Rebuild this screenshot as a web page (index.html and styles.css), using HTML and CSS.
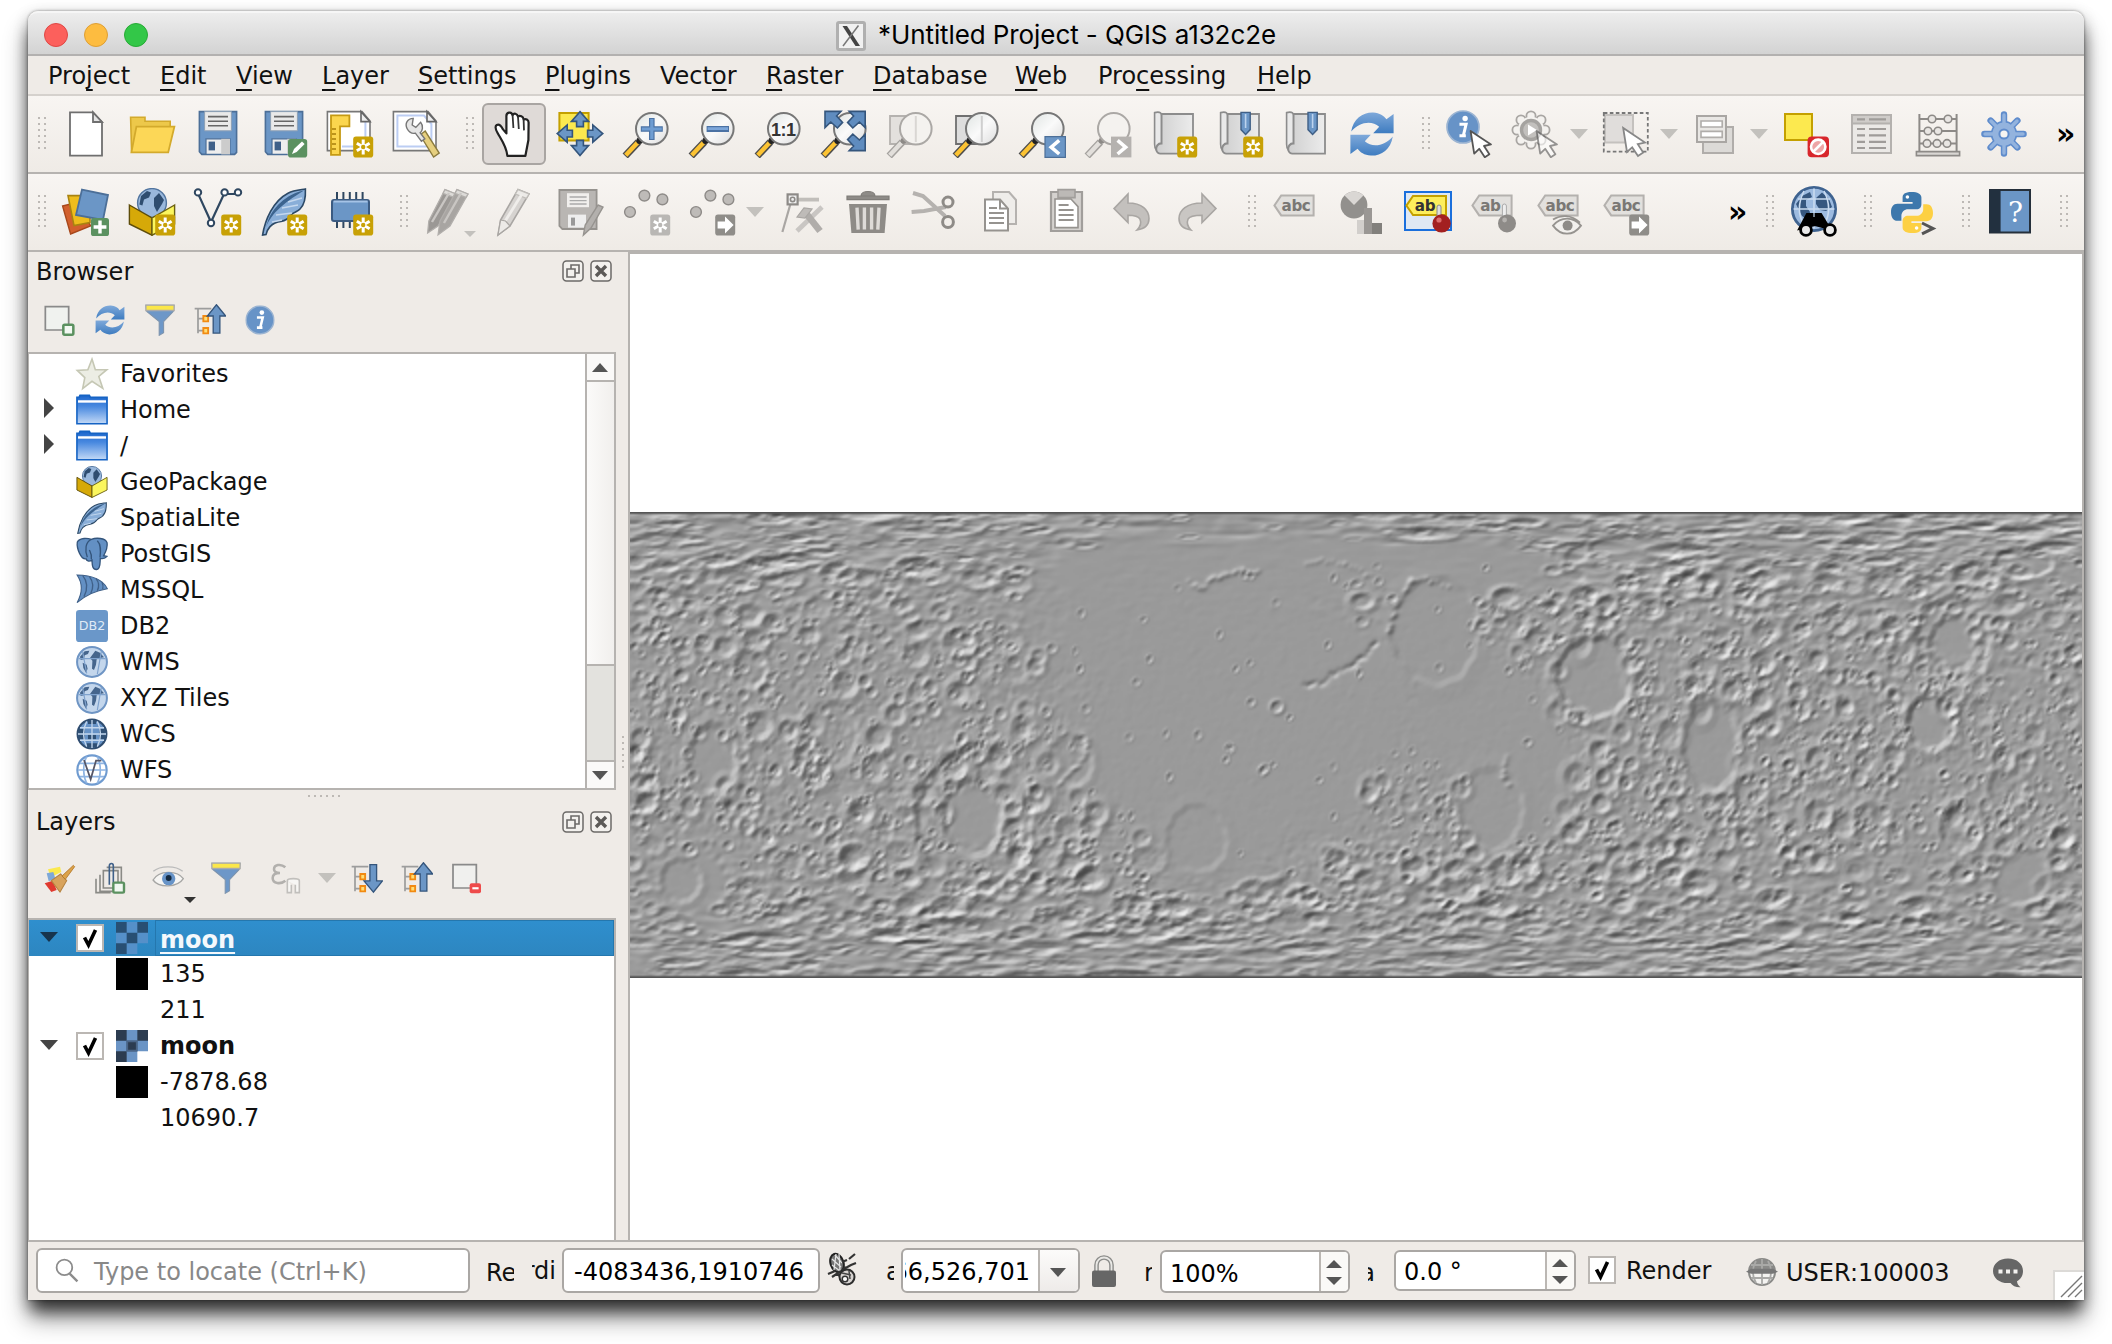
FILE: index.html
```html
<!DOCTYPE html>
<html lang="en">
<head>
<meta charset="utf-8">
<title>*Untitled Project - QGIS a132c2e</title>
<link rel="stylesheet" href="styles.css">
</head>
<body>
<svg class="sprite" aria-hidden="true">
  <defs>
    <linearGradient id="g-folder" x1="0" y1="0" x2="0" y2="1"><stop offset="0" stop-color="#1c66cc"/><stop offset=".4" stop-color="#4a8ae0"/><stop offset="1" stop-color="#c3d9f6"/></linearGradient>
    <linearGradient id="g-sync" x1="0" y1="0" x2="0" y2="1"><stop offset="0" stop-color="#7fa9da"/><stop offset="1" stop-color="#3e7cc0"/></linearGradient>
    <linearGradient id="g-page" x1="0" y1="0" x2="1" y2="0"><stop offset="0" stop-color="#cfcfcf"/><stop offset="1" stop-color="#ececec"/></linearGradient>
    <linearGradient id="g-lens" x1="0" y1="0" x2="1" y2="1"><stop offset="0" stop-color="#dfe4e2"/><stop offset=".5" stop-color="#fafafa"/><stop offset="1" stop-color="#dcdcdc"/></linearGradient>
  </defs>
  <symbol id="star" viewBox="0 0 24 24"><rect x="13.6" y="13.2" width="10" height="10.6" rx="1.4" fill="#c8a106"/><path d="M18.6 14.8v7.4M15.4 16.6l6.4 3.8M21.8 16.6l-6.4 3.8" stroke="#fff" stroke-width="1.5"/><circle cx="18.6" cy="18.5" r="1.1" fill="#c8a106"/></symbol>
  <symbol id="star-off" viewBox="0 0 24 24"><rect x="13.6" y="13.2" width="10" height="10.6" rx="1.4" fill="#b9b7b4"/><path d="M18.6 14.8v7.4M15.4 16.6l6.4 3.8M21.8 16.6l-6.4 3.8" stroke="#fff" stroke-width="1.5"/><circle cx="18.6" cy="18.5" r="1.1" fill="#b9b7b4"/></symbol>
  <symbol id="arrow-off" viewBox="0 0 24 24"><rect x="13.6" y="13.2" width="10" height="10.6" rx="1.4" fill="#8f8d89"/><path d="M14.8 16.700h3.700v-2.400l4.300 4.200-4.300 4.200v-2.400h-3.700z" fill="#fff"/></symbol>
  <symbol id="cursor" viewBox="0 0 24 24"><path d="M12.3 10.5l1.800 11.300 2.500-2.400 2.800 4.200 2.300-1.500-2.700-4.100 3.500-.8z" fill="#fff" stroke="#555" stroke-width=".9" stroke-linejoin="round"/></symbol>
  <symbol id="mag" viewBox="0 0 24 24"><path d="M1.600 23l6.600-7" stroke="#4c4c4c" stroke-width="3.600"/><path d="M1.900 22.600l5.800-6.200" stroke="#fcc333" stroke-width="2.200"/><circle cx="8.800" cy="15.400" r="1.600" fill="#222"/><circle cx="14.900" cy="9.400" r="7.900" fill="url(#g-lens)" stroke="#777" stroke-width="1"/></symbol>
  <symbol id="mag-off" viewBox="0 0 24 24"><path d="M1.600 23l6.600-7" stroke="#a4a19e" stroke-width="3.600"/><path d="M1.900 22.600l5.800-6.200" stroke="#e2dfdb" stroke-width="2.200"/><circle cx="8.800" cy="15.400" r="1.500" fill="#8d8a87"/><circle cx="14.900" cy="9.400" r="7.900" fill="#f4f2ef" stroke="#aba8a5" stroke-width="1"/></symbol>
  <symbol id="new" viewBox="0 0 24 24"><path d="M4 1.200h11.500L20 6v16.800H4z" fill="#fff" stroke="#6f6f6f" stroke-width=".9"/><path d="M15.500 1.200V6H20z" fill="#e4e4e4" stroke="#6f6f6f" stroke-width=".9"/></symbol>
  <symbol id="open" viewBox="0 0 24 24"><path d="M1.300 3.600h7.200v2h12.600v3H6L1.800 20.800z" fill="#edc84a" stroke="#d3aa2c" stroke-width=".8"/><path d="M4.200 8.300h19l-3.100 12.900H1.700z" fill="#fcd757" stroke="#d3aa2c" stroke-width=".9"/></symbol>
  <symbol id="save" viewBox="0 0 24 24"><path d="M2.700.8h18.600v20.400l-1 1H3.900l-1.200-1.300z" fill="#6b96c6" stroke="#4c6f98" stroke-width=".8"/><path d="M5.300.8h13.400v9.600H5.300z" fill="#e9e9e9" stroke="#8da0b5" stroke-width=".5"/><path d="M7 3.300h10M7 5.600h10M7 7.900h10" stroke="#666" stroke-width=".8"/><path d="M6 14.400h12v7.800H6z" fill="#eee" stroke="#4c6f98" stroke-width=".6"/><path d="M7.300 15.800h3.200v4.400H7.300z" fill="#3f6089"/><path d="M13.600 14.400h4.400v7.800h-4.400z" fill="#ccc"/></symbol>
  <symbol id="sync" viewBox="0 0 24 24"><path d="M1.600 10.800C2.600 4.200 7.600 1 12.600 1.200c3.300.2 5.300 1.600 6.600 3.400L22.800 2v9.600H12.600l3-3.200c-3.800-3.500-10-2.400-14 2.400z" fill="url(#g-sync)"/><path d="M22.400 13.200c-1 6.600-6 9.800-11 9.600-3.300-.2-5.300-1.600-6.600-3.400L1.200 22v-9.600h10.200l-3 3.200c3.800 3.500 10 2.400 14-2.400z" fill="url(#g-sync)"/></symbol>
  <symbol id="map" viewBox="0 0 24 24"><path d="M1.300 1.300C4.500.5 4.800 2 4.800 3v13.500c-2 0-2.800 1.500-2.600 3.600-.8-.8-.9-2-.9-3z" fill="#e9e9e9" stroke="#8c8c8c" stroke-width=".8"/><path d="M4.800 2h15.700v19.800H4c-2.500 0-2.700-4.800.8-5z" fill="url(#g-page)" stroke="#8c8c8c" stroke-width=".9"/></symbol>
  <symbol id="mark" viewBox="0 0 24 24"><path d="M12 1.200h4.600v8.600l-2.300 2.400-2.300-2.400z" fill="#6b96c6" stroke="#3f5f86" stroke-width=".7"/><path d="M14.300 2v7" stroke="#bcd3ee" stroke-width=".8"/></symbol>
  <symbol id="info" viewBox="0 0 24 24"><circle cx="12" cy="12" r="11.300" fill="#6793c7" stroke="#9bb4d2" stroke-width="1.200"/><circle cx="13.500" cy="6" r="1.900" fill="#fff"/><path d="M9.500 10h4.700l-2 8.200h1.800M9.500 18.200h3" stroke="#fff" stroke-width="2.100" fill="none"/></symbol>
  <symbol id="tag" viewBox="0 0 24 24"><path d="M4.600 3.700h16.200v10H4.600L1.200 8.700z" fill="#e2e0dd" stroke="#b4b1ae" stroke-width="1"/></symbol>
  <symbol id="earth" viewBox="0 0 24 24"><circle cx="12" cy="12" r="11.200" fill="#c3d6ec" stroke="#6f95c4" stroke-width="1.500"/><path d="M3 8l3.500-4L10 3.500 9 6l-2.500 1-.5 3-2.500.5zM12 7l2.500-3.500L18 5l3 3.500-3 .5-2.500 1-.5 4-1.500 4-1.500-1 .3-6-1.800-2zM5 12.500l3 1.500.7 3-1.200 3-2-3.500z" fill="#45658c"/><path d="M2 9.500h20M5 4.500l3 16M19 4l-3 17" stroke="#7fa2cd" stroke-width=".9"/></symbol>
  <symbol id="gpkg" viewBox="0 0 24 24"><circle cx="12" cy="7.500" r="7.200" fill="#9ab8dc" stroke="#52759f" stroke-width=".7"/><path d="M6.500 4l3-2.500 2 .7-1 2.600-2.500 1-.8 3-1.500-.5zM13 5l2.500-2.500L18 6l-1 2-2.500 4-1.500-3z" fill="#2f4d70"/><path d="M.7 8.500L12 15v8.600L.7 18z" fill="#d6a908" stroke="#5d4c0a" stroke-width=".7"/><path d="M23.300 8.500L12 15v8.600L23.300 18z" fill="#fbf65e" stroke="#6b6012" stroke-width=".7"/></symbol>
  <symbol id="feather" viewBox="0 0 24 24"><path d="M1.300 23.500C2.500 16 6.500 6.500 14 2.600 17 1 20.600.9 22.700.5c.2 4-.6 8-2.700 10-1 1.200-2.800 1.600-4 2.600-1.400 1.800-3 3.200-5.500 3.600-2.500.2-3.700.8-5.500 2.600-.9 1-1.600 2.300-2 4z" fill="#89aed8" stroke="#2c4966" stroke-width=".8"/><path d="M2 22C5 13 11 8 22 1.200 13 3 6 10 3.800 17z" fill="#3c648f"/><path d="M8 13.500l8-1M11 10l8-1.500M14 7l7-2M6 17l5-1" stroke="#c5d8ee" stroke-width=".7"/></symbol>
  <symbol id="funnel" viewBox="0 0 24 24"><path d="M1.500 1h21l-.6 4.600-7.200 7.600v8.300l-3.300 2v-10.300L2.100 5.600z" fill="#6d97c8" stroke="#7d93ac" stroke-width=".8"/><path d="M1.400.9h21.200v4H1.400z" fill="#fbe74a" stroke="#aaa" stroke-width="1"/></symbol>
  <symbol id="tree" viewBox="0 0 24 24"><path d="M.5 3.500H13M3 3.500V22M3 11h4M3 20h4" stroke="#9d9d9d" stroke-width="1.300" fill="none"/><path d="M7 9h3.600v4H7zM7 18h3.600v4H7z" fill="#ffde74" stroke="#f28a12" stroke-width="1.400"/></symbol>
  <symbol id="collapse" viewBox="0 0 24 24"><use href="#tree"/><path d="M16.800.6l7 8.400h-4.400v12.800h-5V9h-4.400z" fill="#6b96c6" stroke="#34557c" stroke-width="1"/></symbol>
  <symbol id="expand" viewBox="0 0 24 24"><use href="#tree"/><path d="M16.800 22.600l-7-8.400h4.400V2h5v12.200h4.400z" fill="#6b96c6" stroke="#34557c" stroke-width="1"/></symbol>
  <symbol id="folder" viewBox="0 0 24 24"><path d="M.7 22.300V2.500h1.600L3 1h7l.8 1.500h12.500v19.800z" fill="url(#g-folder)" stroke="#1563c4" stroke-width="1.200"/><path d="M1.500 5.600h21" stroke="#fff" stroke-width="1.800"/></symbol>
  <symbol id="raster" viewBox="0 0 24 24"><path d="M0 0h24v16h-8v8H0z" fill="#6a94c5"/><path d="M0 0h8v8H0zM16 0h8v8h-8zM8 8h8v8H8zM0 16h8v8H0z" fill="#2c3c50"/><path d="M8.500 8.500h7v7h-7z" fill="none" stroke="#4a6587" stroke-width="1.200"/></symbol>
  <symbol id="raster-sel" viewBox="0 0 24 24"><path d="M0 0h24v16h-8v8H0z" fill="#5590c9"/><path d="M0 0h8v8H0zM16 0h8v8h-8zM8 8h8v8H8zM0 16h8v8H0z" fill="#284f73"/></symbol>
  <symbol id="float" viewBox="0 0 22 22"><rect x="1" y="1" width="20" height="20" rx="3.500" fill="#f3f1ee" stroke="#6c6a68" stroke-width="1.500"/><path d="M9 9V5h8v8h-4M5 9h8v8H5z" fill="none" stroke="#6c6a68" stroke-width="1.600"/></symbol>
  <symbol id="close" viewBox="0 0 22 22"><rect x="1" y="1" width="20" height="20" rx="3.500" fill="#f3f1ee" stroke="#6c6a68" stroke-width="1.500"/><path d="M6 6l10 10M16 6L6 16" stroke="#5c5a58" stroke-width="3.400"/></symbol>
  <symbol id="check" viewBox="0 0 28 28"><path d="M8.500 13.500l4 7.500L19.500 6" fill="none" stroke="#000" stroke-width="3.600"/></symbol>
</svg>

<main class="window">
  <header class="titlebar">
    <span class="lights"><i class="red"></i><i class="amber"></i><i class="green"></i></span>
    <svg class="xicon" viewBox="0 0 30 30"><rect width="30" height="30" rx="3" fill="#b0b0b0"/><rect x="3" y="3" width="24" height="24" fill="#f1f1f1"/><path d="M6.500 5H11l13 20h-4.500z" fill="#444"/><path d="M22.500 4.500L7 25" stroke="#777" stroke-width="1.500"/></svg>
    <span class="title">*Untitled Project - QGIS a132c2e</span>
  </header>

  <nav class="menubar">
    <span>Pro<u>j</u>ect</span><span><u>E</u>dit</span><span><u>V</u>iew</span><span><u>L</u>ayer</span><span><u>S</u>ettings</span><span><u>P</u>lugins</span><span>Vect<u>o</u>r</span><span><u>R</u>aster</span><span><u>D</u>atabase</span><span><u>W</u>eb</span><span>Pro<u>c</u>essing</span><span><u>H</u>elp</span>
  </nav>

  <section class="toolbar">
    <span class="grip first"></span>
    <span class="btn"><svg viewBox="0 0 24 24"><use href="#new"/></svg></span>
    <span class="btn"><svg viewBox="0 0 24 24"><use href="#open"/></svg></span>
    <span class="btn"><svg viewBox="0 0 24 24"><use href="#save"/></svg></span>
    <span class="btn"><svg viewBox="0 0 24 24"><use href="#save"/><rect x="14" y="14.500" width="9.600" height="9.300" rx="1.400" fill="#5b9160"/><path d="M16 22l1-2.500 4-3.800 1.300 1.300-4 4z" fill="#fff"/></svg></span>
    <span class="btn"><svg viewBox="0 0 24 24"><path d="M.7.800H18L22 5.500v14.800H.7z" fill="#fff" stroke="#777" stroke-width=".8"/><path d="M19.700 6v12.300H8" fill="none" stroke="#bccdf3" stroke-width="1"/><path d="M17.500.8v5H22z" fill="#eee" stroke="#666" stroke-width=".8"/><path d="M2.500 2.700h9.200v5.500H7v14.200H2.500z" fill="#fbd64e" stroke="#c59a13" stroke-width=".9"/><path d="M3 9.500h2M3 12h2M3 14.500h2M3 17h2M3 19.500h2" stroke="#a87f0b" stroke-width=".7"/><use href="#star"/></svg></span>
    <span class="btn"><svg viewBox="0 0 24 24"><path d="M.7.800H18L22 5.500v14.800H.7z" fill="#fff" stroke="#777" stroke-width=".8"/><path d="M2.700 2.800H16l3.700 4.200v11.300h-17z" fill="none" stroke="#bccdf3" stroke-width="1"/><path d="M17.500.8v5H22z" fill="#eee" stroke="#666" stroke-width=".8"/><path d="M14 12.500l2.600-2 7 11-2.800 2z" fill="#e6cf7e" stroke="#8a7a3e" stroke-width=".7"/><path d="M7.600 9.400c-1.400-2.600.2-5.200 3-5.200l-.5 3.300 1.800 1.200 2.400-2.600c1.700 2 .8 4.400-.2 5.300l2.300 3-1.700 1.200-3-4c-1.700.3-3.300-.6-4.100-2.200z" fill="#e6e6e6" stroke="#777" stroke-width=".7"/></svg></span>
    <span class="grip"></span>
    <span class="btn active"><svg viewBox="0 0 24 24"><path d="M8.700 22.900C8.200 18 5.500 14.500 3.800 11.500c-.9-1.600-1.600-3.300-.4-4 1.200-.6 2.300.7 3.100 2.200l1.700 2V3.400C8 1 10.800.5 11.300 2.600c.6-1.200 2.300-.9 2.700.7 1-.7 2.600-.1 2.800 1.400 1-.5 2.500.1 2.500 1.600L19.200 15l-1.500 7.900z" fill="#fff" stroke="#222" stroke-width="1.100" stroke-linejoin="round"/><path d="M11.300 2.600l.4 6.400M14 3.300l.4 6.200M16.800 4.700l.2 5.500" stroke="#333" stroke-width=".9"/></svg></span>
    <span class="btn"><svg viewBox="0 0 24 24"><path d="M1.700 1.500h14.600v13.800H1.700z" fill="#fce94f" stroke="#c4a000" stroke-width="1"/><path d="M12 .8l4.300 4.900h-2.600v2.600h-3.400V5.700H7.700zM12 22.800l4.300-5h-2.600v-2.600h-3.400v2.600H7.700zM.6 11.800l5-4.300v2.600h2.600v3.400H5.600v2.600zM23.400 11.800l-5-4.300v2.600h-2.600v3.400h2.600v2.600z" fill="#6b96c6" stroke="#34557c" stroke-width=".8"/></svg></span>
    <span class="btn"><svg viewBox="0 0 24 24"><use href="#mag"/><path d="M14.900 4v11M9.400 9.500h11" stroke="#4b72a4" stroke-width="2.800"/><path d="M14.900 4.500v10M9.900 9.500h10" stroke="#6f9dd2" stroke-width="1.600"/></svg></span>
    <span class="btn"><svg viewBox="0 0 24 24"><use href="#mag"/><path d="M9.300 9.500h11.200" stroke="#4b72a4" stroke-width="3"/><path d="M9.800 9.300h10.200" stroke="#7ba6da" stroke-width="1.400"/></svg></span>
    <span class="btn"><svg viewBox="0 0 24 24"><use href="#mag"/><text x="14.600" y="12.900" class="one" text-anchor="middle">1:1</text></svg></span>
    <span class="btn"><svg viewBox="0 0 24 24"><use href="#mag"/><path d="M2.500.7h8L8.300 3l3 3.200L8.700 9 5.400 6 2.500 8.800zM22.600.7h-8L16.800 3l-3 3.200L16.400 9l3.300-3 2.900 2.800zM22.600 20.300h-8l2.200-2.300-3-3.200 2.600-2.800 3.300 3 2.900-2.800z" fill="#5f8cbf" stroke="#34557c" stroke-width=".8"/></svg></span>
    <span class="btn"><svg viewBox="0 0 24 24"><path d="M2 3h12v14H2z" fill="#e3e0dd" stroke="#b5b2af" stroke-width=".9"/><use href="#mag-off"/><path d="M14.900 3v13" stroke="#d9d6d3"/></svg></span>
    <span class="btn"><svg viewBox="0 0 24 24"><path d="M2 3h12v14H2z" fill="#ddd" stroke="#6f6f6f" stroke-width=".9"/><use href="#mag"/><path d="M14.900 3v13" stroke="#cfcfcf"/></svg></span>
    <span class="btn"><svg viewBox="0 0 24 24"><use href="#mag"/><path d="M13.500 13.300h10.200v10.400H13.500z" fill="#6b96c6" stroke="#4c6f98" stroke-width=".6"/><path d="M20.600 15.200l-4 3.400 4 3.400" fill="none" stroke="#fff" stroke-width="1.800"/></svg></span>
    <span class="btn"><svg viewBox="0 0 24 24"><use href="#mag-off"/><path d="M13.500 13.300h10.200v10.400H13.500z" fill="#b5b2af"/><path d="M16.800 15.200l4 3.400-4 3.400" fill="none" stroke="#fff" stroke-width="1.800"/></svg></span>
    <span class="btn"><svg viewBox="0 0 24 24"><use href="#map" x="1"/><use href="#star"/></svg></span>
    <span class="btn"><svg viewBox="0 0 24 24"><use href="#map" x="1"/><use href="#mark" x=".5"/><use href="#star"/></svg></span>
    <span class="btn"><svg viewBox="0 0 24 24"><use href="#map" x="1"/><use href="#mark" x="1"/></svg></span>
    <span class="btn"><svg viewBox="0 0 24 24"><use href="#sync"/></svg></span>
    <span class="grip"></span>
    <span class="btn"><svg viewBox="0 0 24 24"><use href="#info" x="0" y="0" width="17" height="17"/><use href="#cursor"/></svg></span>
    <span class="btn"><svg viewBox="0 0 24 24"><g fill="#f4f2ef" stroke="#a9a6a3" stroke-width=".9"><circle cx="9.500" cy="3" r="2.300"/><circle cx="9.500" cy="17" r="2.300"/><circle cx="2.500" cy="10" r="2.300"/><circle cx="16.500" cy="10" r="2.300"/><circle cx="4.500" cy="5" r="2.300"/><circle cx="14.500" cy="5" r="2.300"/><circle cx="4.500" cy="15" r="2.300"/><circle cx="14.500" cy="15" r="2.300"/></g><circle cx="9.500" cy="10" r="6.600" fill="#f4f2ef"/><circle cx="9.500" cy="10" r="5.600" fill="#a5a3a0"/><circle cx="9.500" cy="10" r="3.900" fill="#c2c0bd"/><path d="M8 7.200v5.600l4.400-2.800z" fill="#fff"/><g opacity=".6"><use href="#cursor"/></g></svg></span>
    <span class="caret"></span>
    <span class="btn"><svg viewBox="0 0 24 24"><path d="M1.500 2.500h14v13.800h-14z" fill="#e0dddb" stroke="#c4c1be"/><path d="M.9 1.500h22v19.300H.9z" fill="none" stroke="#777" stroke-width=".9" stroke-dasharray="1.800 1.200"/><path d="M10.600 9l1.900 12 2.600-2.300 2.900 4.300 2.600-1.700-2.700-4.200 3.600-.8z" fill="#fff" stroke="#888" stroke-width=".9"/></svg></span>
    <span class="caret"></span>
    <span class="btn"><svg viewBox="0 0 24 24"><path d="M5.500 8.500h15v13h-15z" fill="#dcdad7" stroke="#b0adaa"/><path d="M2.500 3H17v13H2.500z" fill="#e9e7e4" stroke="#a9a6a3"/><path d="M4.500 5.500h10.600v3H4.500zM4.500 10.700h10.600v3H4.500z" fill="#fff" stroke="#b0adaa" stroke-width=".8"/></svg></span>
    <span class="caret"></span>
    <span class="btn"><svg viewBox="0 0 24 24"><path d="M1.500 2H15v13H1.500z" fill="#fce94f" stroke="#c4a000"/><rect x="12.800" y="13.300" width="10.700" height="10.300" rx="2" fill="#d8262c"/><circle cx="18.100" cy="18.400" r="3.600" fill="#eda5a6" stroke="#fff" stroke-width="1.300"/><path d="M15.500 21l5.200-5.200" stroke="#fff" stroke-width="1.300"/></svg></span>
    <span class="btn"><svg viewBox="0 0 24 24"><path d="M2 2.500h19.500v19H2z" fill="#ebe9e6" stroke="#b4b1ae"/><path d="M2 2.500h19.500v4.200H2z" fill="#cfccc9" stroke="#b4b1ae"/><path d="M4.500 9.500h4M10.500 9.500h8.500M4.500 12.700h4M10.500 12.700h8.500M4.500 15.900h4M10.500 15.900h8.500M4.500 19h4M10.500 19h8.500M4.500 4.700h4M10.500 4.700h8.500" stroke="#9f9c99" stroke-width="1.100"/></svg></span>
    <span class="btn"><svg viewBox="0 0 24 24"><path d="M2.700 2v18.500M21.300 2v18.500M2.700 4.500h18.600M2.700 10.500h18.600M2.700 16.700h18.600" stroke="#8d8a87" stroke-width="1" fill="none"/><path d="M1.200 20.800h21.600v2H1.200z" fill="#d9d6d3" stroke="#8d8a87" stroke-width=".8"/><g fill="#e9e6e3" stroke="#8d8a87" stroke-width=".8"><circle cx="9" cy="4.500" r="1.900"/><circle cx="17" cy="4.500" r="1.900"/><circle cx="7" cy="10.500" r="1.900"/><circle cx="12" cy="10.500" r="1.900"/><circle cx="6.500" cy="16.700" r="1.900"/><circle cx="11.500" cy="16.700" r="1.900"/><circle cx="16.500" cy="16.700" r="1.900"/></g></svg></span>
    <span class="btn"><svg viewBox="0 0 24 24"><g stroke="#5f8ccc" stroke-width="3.200" stroke-linecap="round"><path d="M12 2.200v19.600M2.200 12h19.600M5.300 5.300l13.400 13.400M18.700 5.300L5.300 18.700"/></g><circle cx="12" cy="12" r="6.600" fill="#5f8ccc"/><g stroke="#93b3de" stroke-width="1.700" stroke-linecap="round"><path d="M12 2.500v19M2.500 12h19M5.500 5.500l13 13M18.500 5.500l-13 13"/></g><circle cx="12" cy="12" r="5.800" fill="#93b3de"/><circle cx="12" cy="12" r="2.300" fill="#f6f4f1" stroke="#5f8ccc"/></svg></span>
    <span class="more">»</span>
  </section>

  <section class="toolbar second">
    <span class="grip first"></span>
    <span class="btn"><svg viewBox="0 0 24 24"><path d="M.3 9l8-2 6 12-10 4z" fill="#d2602d" stroke="#a8481c" stroke-width=".7"/><path d="M3 3.800h11v13.500l-8 1.500z" fill="#eebd1c" stroke="#a98310" stroke-width=".8"/><path d="M10 .8l13 2.700L20.500 16 7 13.500z" fill="#6b96c6" stroke="#4c6f98" stroke-width=".9"/><rect x="14.500" y="15" width="9" height="9" rx="1.300" fill="#5b9160"/><path d="M19 16.300v6.400M15.800 19.500h6.400" stroke="#fff" stroke-width="1.700"/></svg></span>
    <span class="btn"><svg viewBox="0 0 24 24"><use href="#gpkg"/><use href="#star"/></svg></span>
    <span class="btn"><svg viewBox="0 0 24 24"><path d="M2.200 3.200L8.500 17l6.500-14h7" fill="none" stroke="#2f4760" stroke-width="1.100"/><g fill="#fff" stroke="#2f4760"><circle cx="2" cy="2.200" r="1.600"/><circle cx="8.500" cy="17.500" r="1.600"/><circle cx="15.300" cy="2.200" r="1.600"/><circle cx="22" cy="2.200" r="1.600"/></g><use href="#star"/></svg></span>
    <span class="btn"><svg viewBox="0 0 24 24"><use href="#feather"/><use href="#star"/></svg></span>
    <span class="btn"><svg viewBox="0 0 24 24"><path d="M5.500 2v18M8.700 2v18M11.900 2v18M15.100 2v18M18.300 2v14" stroke="#2f4760" stroke-width="1"/><rect x="3" y="6" width="18.500" height="10.500" rx="1" fill="#6b96c6" stroke="#3b5b82"/><path d="M3.800 6.800h17" stroke="#a5c3e6"/><use href="#star"/></svg></span>
    <span class="grip"></span>
    <span class="btn has-mini"><svg viewBox="0 0 24 24"><g stroke="#b2afac" stroke-width=".6"><path d="M10.500.8l5.500 2.200-9 16L1.800 22.500l.6-6z" fill="#9b9895"/><path d="M10.500.8l5.500 2.200-1 1.700-5.500-2z" fill="#dddbd8"/><path d="M16.500.8L22 3l-9 16-6 4.500 1-7z" fill="#a8a5a2"/><path d="M16.500.8L22 3l-1 1.700-5.500-2z" fill="#dddbd8"/><path d="M4 17L12.500 2.500M10 17.500l8.500-15" stroke="#c9c6c3" stroke-width="1.200"/></g></svg><i class="mini"></i></span>
    <span class="btn"><svg viewBox="0 0 24 24"><path d="M14 .8l5.500 2.200-9.500 16-6 4.500 1.300-7.500z" fill="#d6d3d0" stroke="#a9a6a3" stroke-width=".8"/><path d="M14 .8l5.500 2.200-1.300 2.200-5.500-2.200z" fill="#eceae7" stroke="#c1beba" stroke-width=".6"/><path d="M7 17.500l9-14.500" stroke="#efedea" stroke-width="1.400"/><path d="M5.300 16l2.500.5L10 19l-6 4.500z" fill="#eceae7" stroke="#a9a6a3" stroke-width=".6"/></svg></span>
    <span class="btn"><svg viewBox="0 0 24 24"><path d="M1.700 1h18.600v19.500H3.200l-1.500-1.600z" fill="#b9b6b3" stroke="#96938f" stroke-width=".9"/><path d="M5.500 2.600h11v7h-11z" fill="#f1efed"/><path d="M6.800 4.500h8.500M6.800 6.300h8.500M6.800 8h8.500" stroke="#aaa" stroke-width=".7"/><path d="M6 13.300h9v6.500H6z" fill="#eee"/><path d="M7.500 14.800h2v4h-2z" fill="#999"/><path d="M21 8.500l2.500 1L17.500 20l-3.800 3.500.9-5z" fill="#b3b0ad" stroke="#96938f" stroke-width=".7"/></svg></span>
    <span class="btn"><svg viewBox="0 0 24 24"><g fill="#bebbb8" stroke="#8e8b88" stroke-width=".7"><circle cx="11.200" cy="3.800" r="2.700"/><circle cx="20.200" cy="5.700" r="2.700"/><circle cx="4" cy="12" r="2.700"/></g><use href="#star-off" x=".5"/></svg></span>
    <span class="btn"><svg viewBox="0 0 24 24"><g fill="#bebbb8" stroke="#8e8b88" stroke-width=".7"><circle cx="11.200" cy="3.800" r="2.700"/><circle cx="20.200" cy="5.700" r="2.700"/><circle cx="4" cy="12" r="2.700"/></g><use href="#arrow-off"/></svg></span>
    <span class="caret"></span>
    <span class="btn"><svg viewBox="0 0 24 24"><path d="M2.200 22L6.500 7" stroke="#a9a6a3" stroke-width="1.100"/><path d="M9 5.800h11.500" stroke="#c1beba" stroke-width="1.900"/><rect x="4.800" y="3.200" width="5" height="5" fill="#eee" stroke="#8d8a87" stroke-width="1.100"/><circle cx="7.300" cy="5.700" r="1.100" fill="none" stroke="#8d8a87" stroke-width=".8"/><path d="M9.500 21.500L22 9.500" stroke="#c9c6c3" stroke-width="2.400"/><path d="M13.500 12l7.500 9.500" stroke="#b0adaa" stroke-width="3.400"/><path d="M9.500 14.500l3.500-4.500 4 .5-3.500 4.500z" fill="#bebbb8" stroke="#a9a6a3" stroke-width=".6"/></svg></span>
    <span class="btn"><svg viewBox="0 0 24 24"><g transform="translate(.5 .5)"><path d="M1 3.500h21v1.800H1zM8 3.500c0-3 7-3 7 0" fill="#8e8b87" stroke="#7f7c78" stroke-width=".6"/><path d="M2 7.500h19L19.800 22H3.200z" fill="#8e8b87"/><path d="M6 9.300l.6 11M9.700 9.300v11M13.300 9.300v11M17 9.300l-.6 11" stroke="#dedbd8" stroke-width="1.700"/></g></svg></span>
    <span class="btn"><svg viewBox="0 0 24 24"><path d="M1.500 2.500l5 1.500 11 10M.8 12l6.200-.5L18 9.500" stroke="#b5b2af" stroke-width="2" fill="none"/><circle cx="19" cy="7" r="2.500" fill="none" stroke="#8e8b87" stroke-width="1.500"/><circle cx="19" cy="17" r="2.700" fill="none" stroke="#8e8b87" stroke-width="1.500"/></svg></span>
    <span class="btn"><svg viewBox="0 0 24 24"><path d="M8.500 2h8L20 6v12H8.500z" fill="#efedea" stroke="#b5b2af"/><path d="M4.500 5.800H12l4 4.500v11H4.500z" fill="#fff" stroke="#96938f"/><path d="M12 5.800v4.500h4" fill="none" stroke="#96938f"/><path d="M6.500 12.500H14M6.500 15H14M6.500 17.500H14M6.500 10h4" stroke="#96938f" stroke-width=".9"/></svg></span>
    <span class="btn"><svg viewBox="0 0 24 24"><path d="M4.500 2H20v19.500H4.500z" fill="#d5d2cf" stroke="#a19e9b" stroke-width="1.100"/><path d="M8 .8h8.500v4H8z" fill="#bcb9b6" stroke="#a19e9b" stroke-width=".8"/><path d="M6.500 5.500h8L18 9.300v10.500H6.500z" fill="#fff" stroke="#96938f" stroke-width=".8"/><path d="M8.300 8.500h5M8.300 11h7.500M8.300 13.500h7.500M8.300 16h7.500" stroke="#96938f" stroke-width=".9"/></svg></span>
    <span class="btn"><svg viewBox="0 0 24 24"><path d="M3 10.300L10 3v4.500c7 0 10.500 3.500 10.500 7.800 0 3.700-2.500 5.200-6 5.700 1.800-1.800 2.300-3.500 1.500-5.400-.7-1.500-2.500-2-6-2v3.700z" fill="#c3c0bd" stroke="#a9a6a3" stroke-width=".8"/></svg></span>
    <span class="btn"><svg viewBox="0 0 24 24"><path d="M21 10.300L14 3v4.500c-7.500 0-11.500 3.500-11.500 7.800 0 3.700 2.500 5.200 6 5.700-1.800-1.800-2.300-3.500-1.500-5.400.7-1.500 3.500-2 7-2v3.700z" fill="#c9c6c3" stroke="#a9a6a3" stroke-width=".8"/></svg></span>
    <span class="grip"></span>
    <span class="btn"><svg viewBox="0 0 24 24"><use href="#tag"/><text x="12" y="11.500" text-anchor="middle" class="abc">abc</text></svg></span>
    <span class="btn"><svg viewBox="0 0 24 24"><circle cx="8" cy="8.500" r="6.700" fill="#92908d"/><path d="M8 8.500L3.300 3.700a6.700 6.700 0 0 1 9.400 0z" fill="#dad7d4"/><path d="M9.500 16H14v7H9.500z" fill="#d2cfcc"/><path d="M13 10h4v13h-4z" fill="#9a9794"/><path d="M17 17.500h5V23h-5z" fill="#82807c"/></svg></span>
    <span class="btn"><svg viewBox="0 0 24 24"><path d="M.5 2h23v19H.5z" fill="#dfe8f3" stroke="#1a6fdc" stroke-width="1"/><path d="M4.500 4h16.500v9.500H4.500L1.200 8.800z" fill="#fdee5c" stroke="#c4a000"/><text x="10.500" y="11.500" text-anchor="middle" class="abc on">ab</text><path d="M18.500 14V9.500a1 1 0 0 0-2 0v4.500" fill="#ddd" stroke="#888" stroke-width=".5"/><circle cx="18.800" cy="17.700" r="4.600" fill="#a32020"/><circle cx="17.500" cy="16" r="1.300" fill="#dc6c6c"/></svg></span>
    <span class="btn"><svg viewBox="0 0 24 24"><use href="#tag"/><text x="10.200" y="11.500" text-anchor="middle" class="abc">ab</text><path d="M18.200 14V9a1 1 0 0 0-2 0v5" fill="#eee" stroke="#aaa" stroke-width=".5"/><circle cx="18.500" cy="17.700" r="4.500" fill="#8e8b88"/><circle cx="17.300" cy="16" r="1.200" fill="#b5b2af"/></svg></span>
    <span class="btn"><svg viewBox="0 0 24 24"><use href="#tag"/><text x="12" y="11.500" text-anchor="middle" class="abc">abc</text><path d="M8.500 15.800c4-2.500 9-2.500 13.500 1.500M8.500 18.800c4-4.600 10-4.600 14 0-4 5.400-10 5.400-14 0z" fill="#f2f0ed" stroke="#96938f" stroke-width=".9"/><circle cx="15.800" cy="18.800" r="2.500" fill="#8e8b87"/></svg></span>
    <span class="btn"><svg viewBox="0 0 24 24"><use href="#tag"/><text x="12" y="11.500" text-anchor="middle" class="abc">abc</text><use href="#arrow-off"/></svg></span>
    <span class="more mid">»</span>
    <span class="grip"></span>
    <span class="btn"><svg viewBox="0 0 24 24"><circle cx="12" cy="10.500" r="10.800" fill="#9dbbe0" stroke="#3f6390" stroke-width="1.400"/><path d="M3 8l3-4 4-2 1 2.500-3 1.500v3l2 3-1 4-3-2zM13 5l3-2.800 3.500 3.300 1.500 4-3 2-3-.5-2-3z" fill="#36577f"/><path d="M1.800 10.500h20.400M12 .3v20M4 5.500h16M7 1.500c-3 6-3 12 0 17M17 1.500c3 6 3 12 0 17" stroke="#c9dbf0" stroke-width=".8" fill="none"/><path d="M4.500 20.500L8.500 13h2.700v2h1.600v-2h2.700l4.500 7.500-7.500-2z" fill="#000" stroke="#000"/><circle cx="8" cy="21" r="2.700" fill="#e9e9e9" stroke="#000" stroke-width="1.400"/><circle cx="20" cy="21" r="2.700" fill="#e9e9e9" stroke="#000" stroke-width="1.400"/></svg></span>
    <span class="grip"></span>
    <span class="btn"><svg viewBox="0 0 24 24"><path d="M11.800 2c-3.500 0-4.500 1.200-4.500 2.800V7h5v.9H4.700C2.700 7.900 1.500 9.500 1.500 12c0 2.700 1.200 4.400 3.200 4.400h2v-2.500c0-2 1.600-3.300 3.300-3.300h4.300c1.400 0 2.400-1 2.400-2.500V4.800C16.700 3 14.800 2 11.800 2z" fill="#3d78ac"/><circle cx="9.700" cy="4.500" r=".9" fill="#fff"/><path d="M12.200 22.500c3.500 0 4.500-1.200 4.500-2.800v-2.200h-5v-.9h7.600c2 0 3.200-1.600 3.200-4.100 0-2.700-1.200-4.400-3.200-4.400h-1.700v2.500c0 2-1.600 3.300-3.300 3.300H10c-1.400 0-2.700 1-2.700 2.500v3.300c0 1.800 1.900 2.800 4.900 2.800z" fill="#fdd043"/><circle cx="14.300" cy="20" r=".9" fill="#fff"/><path d="M17 17.500l5.500 2.700-5.500 2.700" fill="none" stroke="#555" stroke-width="1.500"/></svg></span>
    <span class="grip"></span>
    <span class="btn"><svg viewBox="0 0 24 24"><path d="M2 1h20v21.300H2z" fill="#6b96c6" stroke="#26303b" stroke-width="1"/><path d="M2 1h5.300v21.300H2z" fill="#22303f"/><text x="14.800" y="16.800" text-anchor="middle" class="help">?</text></svg></span>
    <span class="grip"></span>
  </section>

  <section class="work">
    <aside class="docks">
      <div class="dock browser">
        <div class="dock-title"><span>Browser</span><svg><use href="#float"/></svg><svg><use href="#close"/></svg></div>
        <div class="dock-tools">
          <svg viewBox="0 0 24 24"><path d="M1 2h17.500v17.500H1z" fill="#f0f2ef" stroke="#8a8a8a" stroke-width="1.300"/><rect x="14.500" y="15.500" width="7.500" height="7.500" rx="1" fill="#f2f8f2" stroke="#5b9160" stroke-width="1.900"/></svg>
          <svg><use href="#sync"/></svg>
          <svg><use href="#funnel"/></svg>
          <svg><use href="#collapse"/></svg>
          <svg viewBox="-1 -1 26 26"><use href="#info" width="24" height="24"/></svg>
        </div>
        <div class="list tree-wrap">
          <ul class="tree">
            <li><i></i><svg viewBox="0 0 24 24"><path d="M12 .8l2.500 8h8.600l-6 5 3 9L12 17.500 5 23l1.600-8.300L.9 9.300l8-.5z" fill="#ecede4" stroke="#c5c7b4" stroke-width="1.200"/></svg>Favorites</li>
            <li><i class="right"></i><svg><use href="#folder"/></svg>Home</li>
            <li><i class="right"></i><svg><use href="#folder"/></svg>/</li>
            <li><i></i><svg><use href="#gpkg"/></svg>GeoPackage</li>
            <li><i></i><svg><use href="#feather"/></svg>SpatiaLite</li>
            <li><i></i><svg viewBox="0 0 24 24"><path d="M1 3C3-.5 9 .2 11.500 1 15-.3 22-.2 23.300 3.500c.5 3-1 7-2.600 9.800l2.500.5c-1.200 1.500-3.200 1.900-5 1.500-.2 3 .3 8-2.700 8.300-3.600.2-3.300-4-3.500-7-2.500 1.500-4 .5-4.500-1C4 16.500.3 8 1 3z" fill="#6390c4" stroke="#34557c" stroke-width="1"/><path d="M8.500 14.500C6.500 9 7 3 11.500 1M11.500 16c.5-4-.5-5-1.500-7M16 2c3 3 2.500 8 2 12.500" fill="none" stroke="#34557c" stroke-width="1"/></svg>PostGIS</li>
            <li><i></i><svg viewBox="0 0 24 24"><path d="M.8.8C12 1 20 4 23.500 11 14 12.500 7 16 .8 21.500 5 14 5 7 .8.8z" fill="#6390c4" stroke="#3f6089" stroke-width=".8"/><path d="M5 1c4 5 3.500 11 1 16M10 1.800c3 4 3 9 1 13M15 3.500c2.500 3 2.500 6 1 9M19.500 6c1 2 1 3.500.5 5.500" fill="none" stroke="#3f6089" stroke-width="1"/></svg>MSSQL</li>
            <li><i></i><svg viewBox="0 0 24 24"><rect width="24" height="24" rx="2.500" fill="#6a97c9"/><text x="12" y="14.800" text-anchor="middle" class="db2">DB2</text></svg>DB2</li>
            <li><i></i><svg><use href="#earth"/></svg>WMS</li>
            <li><i></i><svg><use href="#earth"/></svg>XYZ Tiles</li>
            <li><i></i><svg viewBox="0 0 24 24"><circle cx="12" cy="12" r="10.800" fill="#6793c7" stroke="#2f4d70" stroke-width="1.600"/><path d="M2 8h4.500v8H2zM17.500 8H22v8h-4.500zM9 12.500h6V16H9zM9 2h6v2.500H9zM8 19h8v3H8z" fill="#2f5075"/><path d="M3 7.300h18M3 16.700h18M1.500 12h21M12 1.500v21M8 2.500c-3 6-3 13 0 19M16 2.500c3 6 3 13 0 19" stroke="#c3d7ee" stroke-width="1" fill="none"/></svg>WCS</li>
            <li><i></i><svg viewBox="0 0 24 24"><circle cx="12" cy="12" r="11" fill="#fff" stroke="#6f9bd0" stroke-width="1.600"/><path d="M3 7h18M1.500 12h21M3 17h18M8 2c-3 6-3 14 0 20M16 2c3 6 3 14 0 20" stroke="#8fb4e2" stroke-width="1.200" fill="none"/><path d="M6 4.500l5 14.500 4-14h4" stroke="#556" stroke-width="1.300" fill="none"/></svg>WFS</li>
          </ul>
          <div class="scroll"><span class="sb up"></span><span class="thumb"></span><span class="trough"></span><span class="sb down"></span></div>
        </div>
        <div class="split"></div>
      </div>

      <div class="dock layers">
        <div class="dock-title"><span>Layers</span><svg><use href="#float"/></svg><svg><use href="#close"/></svg></div>
        <div class="dock-tools">
          <svg viewBox="0 0 24 24"><path d="M3 5.500l9-2 1 4-8 4z" fill="#fbe94e"/><path d="M2 8.500l5-1 1.500 5-5 2z" fill="#7ea8d8"/><path d="M.5 16l6-2 3 7-4 1.500z" fill="#e03a30"/><path d="M5.500 14l7-5 4.500 5-5 8.500z" fill="#d8a35c" stroke="#b5823f" stroke-width=".8"/><path d="M13.500 10.500L22 2.500l1 1L16 13z" fill="#dca24a" stroke="#b07424" stroke-width=".6"/></svg>
          <svg viewBox="0 0 24 24"><path d="M7 6.500h11v13H7zM4.500 9.500V22H14M1.500 12.500v10.500h11M9.500 4h11v12" fill="none" stroke="#8a8a86" stroke-width="1.200"/><path d="M11.500 17V3c0-2.500 3-2.500 3 0v13" fill="none" stroke="#3f6089" stroke-width="1.200"/><rect x="14.500" y="15.500" width="8" height="7.500" rx="1" fill="#f2f8f2" stroke="#5b9160" stroke-width="1.800"/></svg>
          <span class="eye"><svg viewBox="0 0 24 24"><path d="M1 7c5-4.500 17-4.500 22 0" fill="none" stroke="#bbb" stroke-width="1"/><path d="M.8 13.500C5 6 19 6 23.500 12.500 19 19.500 5 19.500.8 13.500z" fill="#f6f5f3" stroke="#a6a6a4" stroke-width="1"/><circle cx="12.500" cy="12.500" r="5" fill="#6793c7"/><circle cx="12.500" cy="12" r="2.200" fill="#152a40"/></svg><i class="mini dark"></i></span>
          <svg class="wide"><use href="#funnel"/></svg>
          <svg class="wide2" viewBox="0 0 24 24"><path d="M11.500 4C8 1 3 2 3 5.500c0 2 2 2.700 4.500 2.700C4 8.200 2 9.500 2 12c0 4.300 6 5 9.500 2" fill="none" stroke="#b2b0ad" stroke-width="1.900"/><path d="M13 14c0-2 9-2 9 0v9h-3v-6M13 14v9h3v-6" fill="#f7f6f4" stroke="#c1bfbc" stroke-width="1.200"/></svg>
          <span class="caret"></span>
          <svg><use href="#expand"/></svg>
          <svg><use href="#collapse"/></svg>
          <svg viewBox="0 0 24 24"><path d="M1.500 2H19v17.500H1.500z" fill="#f0f0ee" stroke="#8a8a8a" stroke-width="1.300"/><rect x="14" y="16" width="8.500" height="7.500" rx="1.500" fill="#ee4b4b"/><path d="M16 19.700h4.700" stroke="#fff" stroke-width="1.600"/></svg>
        </div>
        <div class="list">
          <ul class="tree layer-tree">
            <li class="selected"><i class="down"></i><b class="box"><svg><use href="#check"/></svg></b><svg><use href="#raster-sel"/></svg><strong>moon</strong></li>
            <li class="leaf"><em class="swatch black"></em>135</li>
            <li class="leaf"><em class="swatch"></em>211</li>
            <li><i class="down"></i><b class="box"><svg><use href="#check"/></svg></b><svg><use href="#raster"/></svg><strong>moon</strong></li>
            <li class="leaf"><em class="swatch black"></em>-7878.68</li>
            <li class="leaf"><em class="swatch"></em>10690.7</li>
          </ul>
        </div>
      </div>
    </aside>
    <div class="vsplit"></div>
    <div class="canvas"><canvas id="relief" width="726" height="233"></canvas></div>
  </section>

  <footer class="status">
    <span class="field search"><svg viewBox="0 0 24 24"><circle cx="10" cy="9" r="7.500" fill="none" stroke="#8c8c8c" stroke-width="1.700"/><path d="M15 15l7.500 7.500" stroke="#8c8c8c" stroke-width="2.300"/></svg>Type to locate (Ctrl+K)</span>
    <span class="clip re">Re</span><span class="clip di">rdi</span>
    <span class="field coord">-4083436,1910746</span>
    <svg class="bug" viewBox="0 0 32 34"><ellipse cx="10" cy="11" rx="6.500" ry="9.500" transform="rotate(-18 10 11)" fill="#777" stroke="#222" stroke-width="2"/><path d="M5 7l9 8M8 3l7 8M5 13l8 6M9 2l-2 16M12 2l1 17" stroke="#e5e5e5" stroke-width="1.200"/><path d="M15 10L20 8M22 7l6-5M1 22l7-3M5 25l9-6M15 18l9-5 5-2M9 21l6 5M17 15l8 6" stroke="#333" stroke-width="2.200" fill="none"/><circle cx="20" cy="25" r="7.500" fill="#d6d2d0" stroke="#2d2d2d" stroke-width="2"/><circle cx="18" cy="27" r="2.800" fill="#fff" stroke="#333" stroke-width="1.500"/><path d="M15 21l9 2M22 19l1 8" stroke="#444" stroke-width="1.500"/></svg>
    <span class="clip sa">a</span>
    <span class="field combo"><span class="val">566,526,701</span><span class="drop"></span></span>
    <svg class="lock" viewBox="0 0 26 32"><path d="M5.500 16V9a7.500 7.500 0 0 1 15 0v7" fill="none" stroke="#8c8c8a" stroke-width="4.600"/><path d="M5.500 16V9a7.500 7.500 0 0 1 15 0v7" fill="none" stroke="#e9e8e5" stroke-width="1.800"/><rect x="1" y="14.500" width="24" height="16.500" rx="2" fill="#666"/></svg>
    <span class="clip sr">r</span>
    <span class="field spin s1"><span class="val">100%</span><span class="steps"><i></i><i></i></span></span>
    <span class="clip sb2">a</span>
    <span class="field spin s2"><span class="val">0.0 °</span><span class="steps"><i></i><i></i></span></span>
    <b class="box"><svg><use href="#check"/></svg></b>
    <span class="render">Render</span>
    <svg class="crs" viewBox="0 0 32 30"><circle cx="16" cy="15" r="13" fill="#f4f3f1" stroke="#8a8a88" stroke-width="2"/><path d="M3.500 13a12.600 12.600 0 0 1 25 0z" fill="#8a8a88"/><path d="M16 2v26M10 4c-4 7-4 15 0 22M22 4c4 7 4 15 0 22M5 8h22M5 21h22" stroke="#a9a9a7" stroke-width="1.800" fill="none"/><path d="M0 14.800l5-3h22l5 3-5 2H5z" fill="#777"/></svg>
    <span class="user">USER:100003</span>
    <svg class="bubble" viewBox="0 0 32 32"><path d="M16 1.500c9 0 15 5.500 15 12.500 0 5-2.500 8.300-6 10.300.3 3 1.500 4.500 3.500 6-4.500.2-8-1.300-10-4.300C8 27 1 21.500 1 14 1 7 7 1.500 16 1.500z" fill="#666"/><path d="M6.500 12.500h4v4h-4zM14 12.500h4v4h-4zM21.500 12.500h4v4h-4z" fill="#f3f2f0"/></svg>
    <svg class="resize" viewBox="0 0 30 30"><path d="M0 0h30v30H0z" fill="#fff"/><path d="M0 30V1h30" fill="none" stroke="#dcdad7" stroke-width="2"/><path d="M7 27L28 6M14 27l14-14M21 27l7-7" stroke="#777" stroke-width="1.400"/></svg>
  </footer>
</main>
<script src="relief.js"></script>
</body>
</html>
```
FILE: styles.css
```css
* { box-sizing: border-box; }
body { margin: 0; height: 1344px; overflow: hidden; background: #fff; padding: 11px 28px 0; font: 24px/36px "DejaVu Sans", sans-serif; color: #111; }
.sprite { position: absolute; width: 0; height: 0; }
svg { display: block; flex: none; overflow: visible; }
i, em { font-style: normal; }

.window { width: 2056px; height: 1289px; display: flex; flex-direction: column; border-radius: 10px 10px 0 0; background: #efebe7; box-shadow: 0 0 3px rgba(0,0,0,.45), 0 14px 16px -4px rgba(0,0,0,.6), 0 18px 24px rgba(0,0,0,.45), 0 4px 16px rgba(0,0,0,.2); }

.titlebar { height: 45px; flex: none; display: flex; align-items: center; padding: 2px 0 0 16px; border-radius: 10px 10px 0 0; background: linear-gradient(#ededed, #d3d3d3); border-top: 2px solid #f6f6f6; border-bottom: 2px solid #b3b1b0; }
.lights { display: flex; gap: 16px; margin-right: 688px; }
.lights i { width: 24px; height: 24px; border-radius: 50%; border: 1.5px solid; }
.red { background: #fc605c; border-color: #df4744 !important; }
.amber { background: #fdbc40; border-color: #de9f34 !important; }
.green { background: #33c748; border-color: #27aa35 !important; }
.xicon { width: 30px; height: 30px; margin-top: 2px; }
.title { font: 26px/36px Inter, sans-serif; letter-spacing: -.09px; color: #000; margin-left: 12px; white-space: nowrap; }

.menubar { height: 40px; flex: none; padding-left: 20px; display: grid; grid-template-columns: 112px 76px 86px 96px 127px 115px 106px 107px 142px 83px 159px auto; line-height: 40px; border-bottom: 2px solid #d5d1cd; }
.menubar u { text-decoration-thickness: 2px; text-underline-offset: 5px; text-decoration-skip-ink: none; }

.toolbar { height: 78px; flex: none; display: flex; align-items: center; background: linear-gradient(#f8f5f2, #efebe6); border-bottom: 2px solid #b6b3b0; }
.btn { width: 66px; height: 62px; flex: none; display: flex; align-items: center; justify-content: center; }
.btn svg { width: 48px; height: 48px; }
.btn.active { width: 64px; margin: 0 1px; border: 2px solid #a9a5a2; border-radius: 6px; background: #dfdad7; }
.grip { width: 32px; height: 34px; flex: none; padding-left: 17px; }
.grip::before { content: ""; display: block; width: 8px; height: 34px; background: conic-gradient(from 270deg at 2px 2px, #bdb9b5 90deg, transparent 0) 0 0 / 6px 6px; }
.grip.first { width: 25px; padding-left: 10px; }
.caret { width: 24px; flex: none; }
.caret::before { content: ""; display: block; margin-left: 1px; width: 0; border: 9px solid transparent; border-top: 10px solid #c3c1bd; border-bottom: 0; }
.more { margin-left: 19px; font-size: 30px; font-weight: bold; line-height: 28px; width: 28px; color: #000; }
.more.mid { margin-left: 69px; width: 21px; }
.has-mini { position: relative; }
.mini { position: absolute; left: 49px; bottom: 6px; border: 6px solid transparent; border-top: 6px solid #c3c1bd; border-bottom: 0; }
.one { font: bold 9px "Liberation Sans", sans-serif; fill: #333; letter-spacing: -.3px; }
.abc { font: bold 7.600px "DejaVu Sans", sans-serif; fill: #7a7875; letter-spacing: -.2px; }
.abc.on { fill: #333; }
.help { font: 14px "DejaVu Serif", serif; fill: #fff; }
.db2 { font: 9.500px "DejaVu Sans", sans-serif; fill: #dfeaf6; }

.work { height: 990px; flex: none; display: flex; border-bottom: 2px solid #b6b3b0; }
.docks { width: 588px; flex: none; display: flex; flex-direction: column; }
.dock { display: flex; flex-direction: column; }
.browser { height: 551px; }
.layers { height: 437px; }
.dock-title { height: 38px; flex: none; display: flex; align-items: center; padding: 0 4px 0 8px; gap: 6px; }
.dock-title span { flex: 1; padding-top: 2px; }
.dock-title svg { width: 22px; height: 22px; }
.dock-tools { height: 62px; flex: none; display: flex; align-items: center; gap: 18px; padding: 0 0 2px 16px; }
.dock-tools svg { width: 32px; height: 32px; }
.list { border: 2px solid #b6b3b0; border-width: 2px 2px 2px 1px; background: #fff; display: flex; flex: 1; min-height: 0; }
.tree { flex: 1; margin: 0; padding: 1px 0 0; list-style: none; overflow: hidden; }
.tree li { height: 36px; display: flex; align-items: center; color: #111; line-height: 38px; }
.tree-wrap .tree { padding-top: 2px; }
.tree li > i { width: 47px; flex: none; }
.tree li > svg { width: 32px; height: 32px; margin-right: 12px; }
.right::before { content: ""; display: block; margin: -4px 0 0 15px; width: 0; border: 10px solid transparent; border-left: 10px solid #444; border-right: 0; }
.down::before { content: ""; display: block; margin: -3px 0 0 11px; width: 0; border: 9px solid transparent; border-top: 10px solid #444; border-bottom: 0; }
.scroll { width: 29px; flex: none; border-left: 2px solid #b6b3b0; display: flex; flex-direction: column; background: #e3e2de; }
.sb { height: 26px; flex: none; background: #faf9f8; display: flex; align-items: center; justify-content: center; padding-right: 2px; }
.sb::before { content: ""; border: 8px solid transparent; border-bottom: 9px solid #555; border-top: 0; }
.sb.down { height: 28px; border-top: 2px solid #b6b3b0; }
.sb.down::before { margin: 0; border: 8px solid transparent; border-top: 9px solid #555; border-bottom: 0; }
.thumb { height: 286px; border: 2px solid #b6b3b0; border-width: 2px 0; background: linear-gradient(90deg, #fbfaf9, #f1efed); }
.trough { flex: 1; }
.split { height: 13px; flex: none; background: conic-gradient(from 270deg at 2px 2px, #bdb9b5 90deg, transparent 0) 280px 5px / 6px 20px repeat-x; background-clip: content-box; padding: 0 276px 0 280px; }
.layers .dock-title { height: 37px; }
.layers .dock-title span { padding-top: 1px; }
.layers .dock-tools { height: 78px; padding-bottom: 3px; }
.layers .eye { width: 48px; margin-left: 0; position: relative; padding-left: 8px; }
.layers .mini { left: 40px; bottom: -9px; }
.mini.dark { border-top-color: #333; }
.layers .wide { margin: 0 10px 0 0; }
.layers .wide2 { margin-right: 4px; }
.layers .dock-tools .caret { width: 16px; margin-left: -7px; }
.layers .list { border-bottom: 0; }
.layer-tree { padding: 0; }
.layer-tree li > svg { margin: 0 12px 0 12px; }
.layer-tree li { line-height: 40px; }
.box { width: 28px; height: 28px; flex: none; border: 2px solid #bbb7b3; background: #fff; display: block; }
.box svg { width: 28px; height: 28px; margin: -2px; }
.leaf { padding-left: 87px; }
.swatch { width: 32px; height: 32px; margin-right: 12px; }
.black { background: #000; }
.tree .selected { background: linear-gradient(#2f8fce, #2d86c0); color: #f4f8fc; }
.selected .down::before { border-top-color: #17344c; }
.selected strong { flex: 1; height: 36px; margin-left: -5px; padding-left: 5px; box-shadow: inset 1px 1px #2477ae, inset -1px -1px #2477ae; text-decoration: underline 2px; text-underline-offset: 4px; }
.vsplit { width: 12px; flex: none; background: conic-gradient(from 270deg at 2px 2px, #bdb9b5 90deg, transparent 0) 6px 484px / 20px 6px repeat-y; background-clip: content-box; padding: 484px 0 471px; }
.canvas { flex: 1; border: 2px solid #b6b3b0; border-width: 2px 2px 0; background: #fff; padding-top: 258px; }
.canvas canvas { display: block; width: 1452px; height: 466px; }

.status { flex: 1; display: flex; align-items: flex-start; padding: 6px 0 0 8px; line-height: 44px; white-space: nowrap; }
.field { height: 45px; flex: none; border: 2px solid #aaa7a4; border-radius: 6px; background: #fff; display: flex; overflow: hidden; color: #000; }
.search { width: 434px; color: #888; padding-left: 16px; }
.search svg { width: 25px; height: 25px; margin: 8px 15px 0 0; }
.clip { flex: none; overflow: hidden; display: flex; color: #111; line-height: 50px; }
.re { width: 28px; margin-left: 16px; }
.di { width: 24px; margin-left: 18px; justify-content: flex-end; line-height: 46px; }
.coord { width: 258px; margin-left: 6px; padding-left: 10px; }
.bug { width: 32px; height: 34px; margin: 4px 0 0 7px; }
.sa { width: 8px; margin-left: 27px; line-height: 48px; }
.combo { width: 179px; margin-left: 7px; }
.combo .val { width: 125px; margin-left: 2px; display: flex; justify-content: flex-end; overflow: hidden; }
.drop { flex: 1; margin-left: 8px; border-left: 2px solid #bbb7b3; background: linear-gradient(#fcfbfa, #eeebe9); display: flex; align-items: center; justify-content: center; }
.drop::before { content: ""; border: 8px solid transparent; border-top: 9px solid #555; border-bottom: 0; margin: 4px 2px 0 0; }
.lock { width: 26px; height: 32px; margin: 8px 0 0 11px; }
.sr { width: 8px; margin-left: 27px; }
.spin { height: 43px; margin-top: 2px; line-height: 45px; }
.spin .val { flex: 1; padding-left: 8px; }
.s1 { width: 190px; margin-left: 8px; }
.s2 { width: 182px; height: 41px; margin-left: 19px; line-height: 41px; }
.sb2 { width: 7px; margin-left: 18px; direction: rtl; }
.steps { width: 29px; padding-right: 1px; border-left: 2px solid #bbb7b3; display: flex; flex-direction: column; align-items: center; justify-content: center; gap: 9px; padding-top: 2px; background: #faf9f7; }
.steps i { width: 0; border: 8px solid transparent; border-bottom: 8px solid #555; border-top: 0; }
.steps i + i { border: 8px solid transparent; border-top: 8px solid #555; border-bottom: 0; }
.status .box { margin: 8px 0 0 12px; }
.render { width: 86px; margin-left: 10px; line-height: 47px; }
.crs { width: 32px; height: 30px; margin: 9px 0 0 34px; }
.user { width: 164px; margin-left: 8px; line-height: 50px; }
.bubble { width: 32px; height: 32px; margin: 9px 0 0 42px; }
.resize { width: 30px; height: 30px; margin: 22px 0 0 auto; }
```
FILE: relief.js
```js
// Shaded relief of a cratered surface, lit from the upper left.
(function () {
  var canvas = document.getElementById('relief');
  var ctx = canvas.getContext('2d');
  var W = canvas.width, H = canvas.height;
  var height = new Float32Array(W * H);
  var seed = 20173;
  function rnd() {
    seed = (seed * 1664525 + 1013904223) >>> 0;
    return seed / 4294967296;
  }

  // Smooth plains: centre x, centre y, radius x, radius y
  var plains = [
    [280, 55, 70, 44], [278, 115, 52, 45], [335, 95, 58, 42], [402, 60, 23, 27],
    [295, 145, 34, 36], [340, 132, 28, 30], [420, 98, 32, 30], [450, 130, 20, 34],
    [482, 82, 20, 20], [540, 117, 15, 22], [430, 148, 17, 22], [320, 25, 95, 12],
    [410, 28, 45, 14], [172, 152, 14, 15], [283, 163, 18, 20], [697, 182, 15, 15],
    [661, 66, 10, 12], [30, 185, 18, 16], [240, 30, 30, 14], [650, 106, 10, 12],
    [502, 19, 18, 7], [41, 123, 10, 14]
  ];
  function roughness(x, y) {
    var r = 1;
    for (var i = 0; i < plains.length; i++) {
      var p = plains[i];
      var d = Math.hypot((x - p[0]) / p[2], (y - p[1]) / p[3]);
      var edge = p[2] > 27 ? 1.5 : 5;
      if (d < 1.6) r = Math.min(r, d < 0.85 ? 0.05 : 0.05 + (d - 0.85) * edge);
    }
    return r;
  }
  function stretch(y) {
    return Math.min(6, 1 / Math.max(0.12, Math.cos((y / H - 0.5) * Math.PI)));
  }
  // wall: share of the radius taken by the inner slope
  function crater(cx, cy, rx, ry, depth, wall) {
    var x0 = Math.max(0, Math.floor(cx - rx * 1.8)), x1 = Math.min(W - 1, Math.ceil(cx + rx * 1.8));
    var y0 = Math.max(0, Math.floor(cy - ry * 1.8)), y1 = Math.min(H - 1, Math.ceil(cy + ry * 1.8));
    var ph = rnd() * 6, wob = rx > 8 ? 0.018 : 0, apron = rx > 8 ? 0.3 : 0.6;
    for (var y = y0; y <= y1; y++) {
      for (var x = x0; x <= x1; x++) {
        var d = Math.hypot((x - cx) / rx, (y - cy) / ry), h = 0;
        if (wob) {
          var a = Math.atan2(y - cy, x - cx);
          d += wob * (Math.sin(a * 3 + ph) + Math.sin(a * 13 + ph * 3) * 1.2);
        }
        if (d < 1 - wall) h = -0.6;
        else if (d < 1) h = -0.6 + (d - 1 + wall) / wall;
        else if (d < 1 + apron) h = 0.4 * (1 + apron - d) / apron;
        height[y * W + x] += h * depth;
      }
    }
  }
  function bump(cx, cy, rx, ry, amp) {
    var x0 = Math.max(0, Math.floor(cx - rx * 2)), x1 = Math.min(W - 1, Math.ceil(cx + rx * 2));
    var y0 = Math.max(0, Math.floor(cy - ry * 2)), y1 = Math.min(H - 1, Math.ceil(cy + ry * 2));
    for (var y = y0; y <= y1; y++) {
      for (var x = x0; x <= x1; x++) {
        var dx = (x - cx) / rx, dy = (y - cy) / ry;
        height[y * W + x] += amp * Math.exp(-(dx * dx + dy * dy) * 1.3);
      }
    }
  }

  var i, x, y, k;
  for (i = 0; i < 28000; i++) {
    x = rnd() * W; y = rnd() * H;
    k = roughness(x, y);
    bump(x, y, (0.9 + rnd() * 1.1) * Math.min(3, stretch(y)), 0.9 + rnd() * 1.3, (rnd() - 0.5) * 20 * (0.08 + 0.92 * k));
  }
  for (i = 0; i < 3600; i++) {
    x = rnd() * W; y = rnd() * H;
    k = roughness(x, y);
    if (rnd() > k * k - 0.015) continue;
    var r = 1.5 + Math.pow(rnd(), 4) * 5.5;
    crater(x, y, r * Math.min(3, Math.pow(stretch(y), 0.8)), r * (y < 25 || y > 210 ? 0.6 : 1.1), (15 + rnd() * 30) * (0.7 + r / 9), 0.5);
  }
  for (i = 0; i < 60; i++) {
    crater(220 + rnd() * 240, 25 + rnd() * 150, 1.2 + rnd() * 0.9, 1.4 + rnd(), 12 + rnd() * 22, 0.5);
  }

  // Named basins and large rings: x, y, rx, ry, depth
  [
    [402, 59, 23, 28, 18], [482, 82, 20, 21, 52], [540, 117, 15, 24, 34], [430, 148, 17, 22, 16],
    [283, 163, 16, 18, 14], [171, 152, 16, 21, 38], [172, 153, 30, 38, 44], [41, 123, 13, 19, 44],
    [100, 111, 14, 18, 28], [661, 66, 13, 15, 40], [661, 64, 20, 23, 40], [650, 105, 13, 15, 54],
    [695, 182, 15, 15, 26], [25, 184, 11, 12, 26], [55, 146, 9, 11, 44], [120, 37, 9, 9, 32],
    [696, 25, 16, 8, 44], [502, 19, 24, 8, 30], [502, 24, 36, 16, 24], [549, 38, 14, 13, 36],
    [672, 34, 12, 9, 32], [665, 157, 11, 14, 50], [560, 141, 9, 12, 40], [570, 152, 8, 10, 30],
    [488, 134, 6, 7, 36], [688, 138, 10, 12, 34], [330, 205, 12, 6, 30], [632, 210, 22, 8, 30],
    [250, 198, 11, 8, 26], [475, 64, 6, 9, 34], [535, 98, 6, 8, 36], [323, 97, 3, 3, 44],
    [220, 124, 12, 14, 24], [525, 166, 11, 12, 30], [620, 156, 9, 12, 40], [370, 138, 5, 6, 38],
    [402, 207, 12, 8, 26], [415, 138, 5, 5, 36], [130, 208, 13, 6, 34], [22, 205, 10, 4, 26],
    [482, 184, 7, 8, 28], [524, 48, 7, 8, 24], [545, 65, 8, 9, 30], [408, 152, 6, 7, 30],
    [60, 78, 9, 11, 40], [28, 44, 7, 9, 34], [470, 20, 10, 6, 30]
  ].forEach(function (c) { crater(c[0], c[1], c[2], c[3], c[4], Math.min(0.45, 2.8 / c[2])); });

  // Mountain arcs bordering the plains: bright scarps, then shadowed ones
  function scarp(line, amp) {
    for (var n = 0; n < line.length - 1; n++) {
      for (var t = 0; t < 1; t += 0.25) {
        bump(line[n][0] + (line[n + 1][0] - line[n][0]) * t, line[n][1] + (line[n + 1][1] - line[n][1]) * t + rnd() * 2.5, 1.5, 1.3, amp * (0.4 + rnd()));
      }
    }
  }
  scarp([[337, 85], [345, 84], [352, 79], [360, 76], [367, 70], [374, 63]], -26);
  scarp([[379, 57], [383, 46], [387, 38], [391, 32], [400, 33], [412, 37]], 22);
  scarp([[279, 33], [286, 36], [292, 31], [298, 29], [306, 28], [316, 28]], 22);
  scarp([[338, 24], [348, 23], [360, 26], [370, 30], [378, 38]], 14);
  scarp([[213, 135], [221, 128], [227, 122], [229, 110]], 22);
  scarp([[438, 120], [436, 130], [441, 138]], 18);

  // Long polar ridges
  for (i = 0; i < 380; i++) {
    y = rnd() < 0.4 ? Math.pow(rnd(), 2) * 16 : H - Math.pow(rnd(), 2) * 18;
    bump(rnd() * W, y, 6 + rnd() * rnd() * 34, 0.8 + rnd() * 0.8, (rnd() - 0.5) * 60 * rnd());
  }

  var img = ctx.createImageData(W, H);
  for (y = 0; y < H; y++) {
    for (x = 0; x < W; x++) {
      var l = height[y * W + Math.max(0, x - 1)], rr = height[y * W + Math.min(W - 1, x + 1)];
      var u = height[Math.max(0, y - 1) * W + x], d = height[Math.min(H - 1, y + 1) * W + x];
      var g = ((rr - l) * 0.8 + (d - u) * 0.85) * 1.5;
      var v = 154 + 98 * Math.tanh(g / 100);
      if (y === 0 || y === H - 1) v = 85;
      var o = (y * W + x) * 4;
      img.data[o] = img.data[o + 1] = img.data[o + 2] = v;
      img.data[o + 3] = 255;
    }
  }
  ctx.putImageData(img, 0, 0);
})();
```
